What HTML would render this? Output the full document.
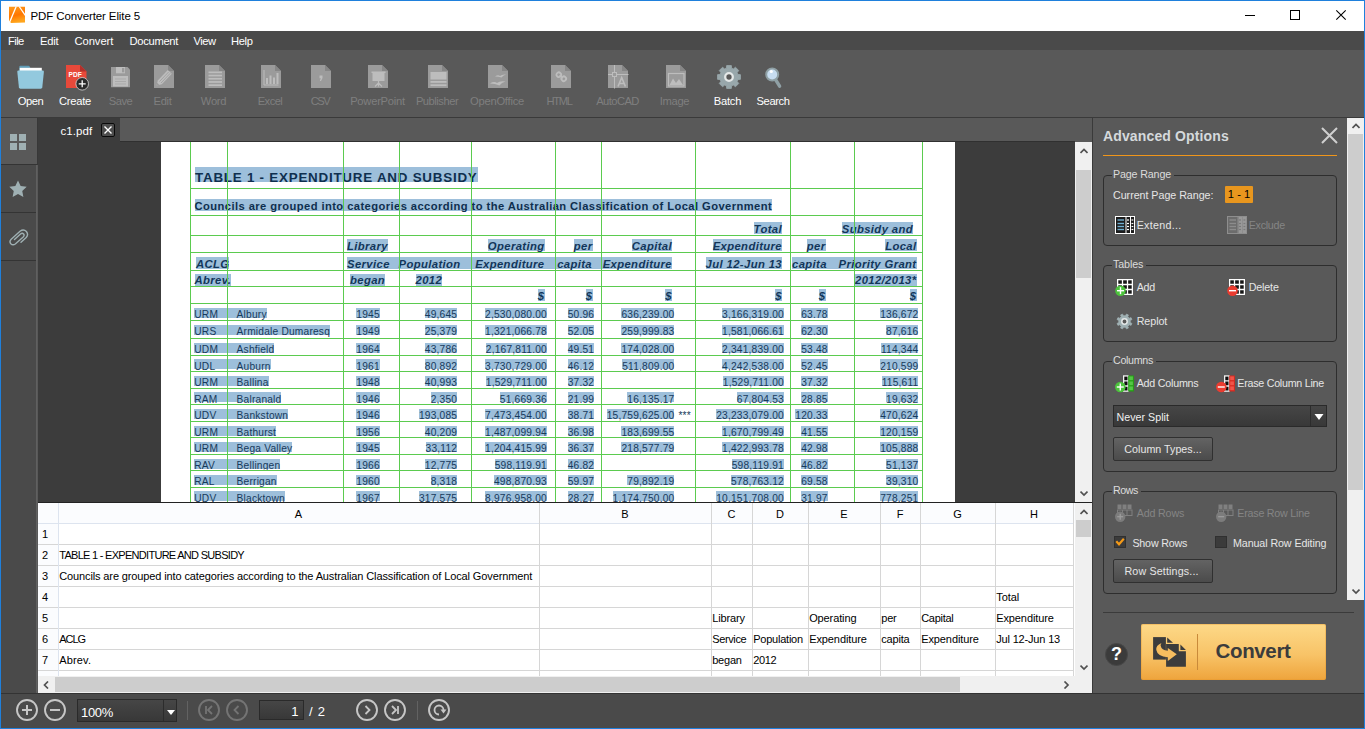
<!DOCTYPE html>
<html><head><meta charset="utf-8"><title>PDF Converter Elite 5</title>
<style>
*{box-sizing:border-box;margin:0;padding:0}
html,body{width:1365px;height:729px;overflow:hidden;background:#595959;font-family:"Liberation Sans",sans-serif;font-size:12px;color:#fff}
.a{position:absolute}
#win{position:absolute;left:0;top:0;width:1365px;height:729px;border:1px solid #1f80dc;overflow:hidden}
#title{left:0;top:0;width:1363px;height:30px;background:#fff}
#title .t{left:29.500px;top:9px;color:#000;font-size:11.5px;white-space:nowrap}
#menu{left:0;top:30px;width:1363px;height:19px;background:#4a4a4a}
#menu span{position:absolute;top:4px;font-size:11.2px;white-space:nowrap;color:#fff}
#tool{left:0;top:49px;width:1363px;height:68px;background:#595959;border-bottom:1px solid #3a3a3a;z-index:2}
.tl{position:absolute;top:45px;font-size:11.2px;white-space:nowrap;color:#fff;transform:translateX(-50%)}
.tl.d{color:#7f7f7f}
#side{left:0;top:116px;width:36px;height:576px;background:#4a4a4a;border-right:1px solid #606060}
.sb{position:absolute;left:0;width:35px;height:48px;background:#4a4a4a;border-bottom:1px solid #343434}
#tabs{left:37px;top:116px;width:1054px;height:24px;background:#595959;z-index:1}
#tab{left:0;top:0;width:82px;height:25px;background:#3c3c3c}
#doc{left:37px;top:140px;width:1037px;height:361px;background:#3c3c3c;overflow:hidden;border-top:1px solid #303030}
#page{left:123px;top:0;width:794px;height:361px;background:#fff;overflow:hidden}
#vs1{left:1074px;top:141px;width:17px;height:360px;background:#f0f0f0}
#sheet{left:37px;top:502px;width:1037px;height:173px;background:#fff;overflow:hidden;color:#000}
#vs2{left:1074px;top:502px;width:17px;height:173px;background:#f0f0f0}
#hs{left:37px;top:675px;width:1054px;height:17px;background:#f0f0f0}
#bot{left:0;top:692px;width:1363px;height:35px;background:#4a4a4a;border-top:1px solid #333}
#panel{left:1091px;top:116px;width:272px;height:576px;background:#595959;border-left:1px solid #3a3a3a}

#page i{position:absolute;display:block;z-index:3}
#page i.hb{z-index:0}
#page .v{top:0;width:1px;height:361px;background:#5bcb4f}
#page .hz{left:29px;width:733px;height:1px;background:#5bcb4f}
#page .hb{background:#9dbfdb}
#page b{position:absolute;display:block;white-space:nowrap;font-weight:normal;color:#173a5b;background:#9dbfdb;font-size:10.2px;letter-spacing:0.2px;z-index:1}
#page b.n{background:none}
#page b.t1{font-weight:bold;font-size:13.4px;color:#0f2f4f;letter-spacing:0.76px}
#page b.t2{font-weight:bold;font-size:11.2px;color:#0f2f4f;letter-spacing:0.42px}
#page b.hd{font-weight:bold;font-style:italic;font-size:11.3px;color:#12365a;letter-spacing:0.37px}

/*REST0*/
.th{background:#cdcdcd}
#sheet i{position:absolute;display:block}
#sheet .rl{left:0;width:1036px;height:1px;background:#d6d6d6}
#sheet .rl.hd{background:#dde4ef}
#sheet .cl{top:0;width:1px;height:174px;background:#d6d6d6}
#sheet .cl.hd{background:#dde4ef}
#sheet span{position:absolute;white-space:nowrap;color:#000;font-size:11px;line-height:12px}
#sheet .ch{top:5px;transform:translateX(-50%)}
#sheet .rh{left:4px}
#sheet .ce{letter-spacing:-0.2px}
/*REST1*/

/*PAN0*/
.gb{border:1px solid #2e2e2e;border-radius:4px}
.gl{background:#595959;font-size:10.7px;line-height:14px;color:#dcdcdc;white-space:nowrap;padding-left:1px}
.pl{font-size:10.7px;line-height:13px;color:#e6e6e6;white-space:nowrap}
.pl.dis{color:#858585}
.sel{border:1px solid #2a2a2a;background:linear-gradient(#464646,#383838)}
.btn{border:1px solid #303030;border-radius:2px;background:linear-gradient(#636363,#4b4b4b);font-size:10.7px;line-height:22px;text-align:center;color:#e6e6e6;white-space:nowrap}
.cb{width:12px;height:12px;background:#3b3b3b;border:1px solid #303030}
/*PAN1*/
</style></head><body>
<div id="win">
<div id="title" class="a">
<svg class="a" style="left:7px;top:5px" width="18" height="18" viewBox="0 0 18 18"><defs><linearGradient id="lg" x1="0" y1="0" x2="0.250" y2="1"><stop offset="0" stop-color="#ff9c1c"/><stop offset="0.600" stop-color="#ff7600"/><stop offset="1" stop-color="#ffa51c"/></linearGradient></defs><path d="M1 0.800 H17 V16.500 L3 16.900 L1 14.500 Z" fill="url(#lg)"/><path d="M8.200 0.500 L1.700 16" stroke="#fff" stroke-width="1.300" fill="none"/><path d="M11.200 0.500 L17.300 9.300" stroke="#fff" stroke-width="1.300" fill="none"/></svg>
<span class="a t" style="letter-spacing:-0.11px;margin-right:0.11px;">PDF Converter Elite 5</span>
<svg class="a" style="left:1237px;top:8px" width="120" height="14" viewBox="0 0 120 14"><path d="M7 6.500 H17" stroke="#000" stroke-width="1"/><rect x="52.500" y="1.500" width="9" height="9" fill="none" stroke="#000" stroke-width="1"/><path d="M98.300 1.300 L107.700 10.700 M107.700 1.300 L98.300 10.700" stroke="#000" stroke-width="1.100"/></svg>
</div>
<div id="menu" class="a"><span style="letter-spacing:-0.56px;margin-right:0.56px;left:7px">File</span><span style="letter-spacing:-0.25px;margin-right:0.25px;left:39px">Edit</span><span style="letter-spacing:-0.06px;margin-right:0.06px;left:73.500px">Convert</span><span style="letter-spacing:-0.31px;margin-right:0.31px;left:128.500px">Document</span><span style="letter-spacing:-0.46px;margin-right:0.46px;left:192.500px">View</span><span style="letter-spacing:-0.35px;margin-right:0.35px;left:230px">Help</span></div>
<div id="tool" class="a"><svg class="a" style="left:16px;top:15px" width="28" height="25" viewBox="0 0 28 25"><path d="M2.300 1.800 Q2.300 0.800 3.300 0.800 H11.500 Q12.300 0.800 12.700 1.600 L13.500 3.200 H23 V8 H2.300 Z" fill="#5f9cb6"/><path d="M2.700 2.800 H24.800 V9 H2.700 Z" fill="#fff"/><path d="M0.300 6.800 Q0.200 5.500 1.500 5.500 H25.700 Q27 5.500 26.900 6.800 L25.300 22.300 Q25.100 23.700 23.800 23.700 H3.400 Q2.100 23.700 1.900 22.300 Z" fill="#93c9de"/></svg><svg class="a" style="left:65px;top:14px" width="25" height="28" viewBox="0 0 25 28"><path d="M0 1 H14 L20.500 7.500 V24 H0 Z" fill="#e8493a"/><path d="M14 1 L20.500 7.500 H14 Z" fill="#b5302a"/><text x="2.600" y="12.600" font-family="Liberation Sans" font-weight="bold" font-size="6.600" fill="#fff">PDF</text><circle cx="16.200" cy="19.800" r="6.300" fill="#2b2b2b" stroke="#d8d8d8" stroke-width="0.800"/><path d="M12.700 19.800 H19.700 M16.200 16.300 V23.300" stroke="#fff" stroke-width="1.300"/></svg><svg class="a" style="left:110px;top:17px" width="20" height="21" viewBox="0 0 20 21"><path d="M0 0 H16.500 L19 2.500 V20.300 H0 Z" fill="#9b9b9b"/><rect x="5" y="0" width="9" height="6.300" fill="#bdbdbd"/><rect x="11" y="1" width="2.300" height="4.300" fill="#9b9b9b"/><rect x="2" y="9" width="15" height="10.500" fill="#bdbdbd"/><path d="M4 12 H15 M4 14.500 H15 M4 17 H15" stroke="#a8a8a8" stroke-width="0.900"/></svg><svg class="a" style="left:153px;top:15px" width="21" height="24" viewBox="0 0 21 24"><path d="M0 0 H14 L20 6 V23 H0 Z" fill="#9b9b9b"/><path d="M14 0 L20 6 H14 Z" fill="#868686"/><path d="M2.500 20.500 L3.800 15.500 L13.800 5 L17.800 8.800 L7.800 19.300 Z" fill="#bdbdbd"/><path d="M5.500 16.500 L14.800 6.800 M7 18 L16.300 8.200" stroke="#9b9b9b" stroke-width="0.800"/><path d="M2.500 20.500 L3.200 17.800 L5.200 19.800 Z" fill="#9b9b9b"/></svg><svg class="a" style="left:204px;top:15px" width="21" height="24" viewBox="0 0 21 24"><path d="M0 0 H14 L20 6 V23 H0 Z" fill="#9b9b9b"/><path d="M14 0 L20 6 H14 Z" fill="#868686"/><rect x="3.500" y="6.5" width="13.500" height="1.700" fill="#bdbdbd"/><rect x="3.500" y="9.7" width="13.500" height="1.700" fill="#bdbdbd"/><rect x="3.500" y="12.9" width="13.500" height="1.700" fill="#bdbdbd"/><rect x="3.500" y="16.1" width="13.500" height="1.700" fill="#bdbdbd"/><rect x="3.500" y="19.3" width="13.500" height="1.700" fill="#bdbdbd"/></svg><svg class="a" style="left:260px;top:15px" width="21" height="24" viewBox="0 0 21 24"><path d="M0 0 H14 L20 6 V23 H0 Z" fill="#9b9b9b"/><path d="M14 0 L20 6 H14 Z" fill="#868686"/><path d="M3 5 V20 H17.500" stroke="#bdbdbd" stroke-width="1" fill="none"/><rect x="5" y="13" width="2" height="6" fill="#bdbdbd"/><rect x="8.500" y="10.500" width="2" height="8.500" fill="#bdbdbd"/><rect x="12" y="12.500" width="2" height="6.500" fill="#bdbdbd"/><rect x="15.500" y="8" width="2" height="11" fill="#bdbdbd"/></svg><svg class="a" style="left:310px;top:15px" width="21" height="24" viewBox="0 0 21 24"><path d="M0 0 H14 L20 6 V23 H0 Z" fill="#9b9b9b"/><path d="M14 0 L20 6 H14 Z" fill="#868686"/><path d="M8.500 10.500 H11.500 V13 L10 16 H8.800 L9.800 13.300 H8.500 Z" fill="#bdbdbd"/></svg><svg class="a" style="left:367px;top:15px" width="21" height="24" viewBox="0 0 21 24"><path d="M0 0 H14 L20 6 V23 H0 Z" fill="#9b9b9b"/><path d="M14 0 L20 6 H14 Z" fill="#868686"/><rect x="3.500" y="6.500" width="14" height="1.500" fill="#bdbdbd"/><rect x="4.500" y="8" width="12" height="8" fill="#bdbdbd"/><path d="M10.500 16 V18.500 M10.500 18 L7 21.500 M10.500 18 L14 21.500 M10.500 18 V21.500" stroke="#bdbdbd" stroke-width="1.200" fill="none"/></svg><svg class="a" style="left:427px;top:15px" width="21" height="24" viewBox="0 0 21 24"><path d="M0 0 H14 L20 6 V23 H0 Z" fill="#9b9b9b"/><path d="M14 0 L20 6 H14 Z" fill="#868686"/><rect x="2.500" y="7" width="16" height="7.500" fill="#bdbdbd"/><rect x="2.500" y="16" width="16" height="1.800" fill="#bdbdbd"/><rect x="2.500" y="19.300" width="16" height="1.800" fill="#bdbdbd"/></svg><svg class="a" style="left:487px;top:15px" width="21" height="24" viewBox="0 0 21 24"><path d="M0 0 H14 L20 6 V23 H0 Z" fill="#9b9b9b"/><path d="M14 0 L20 6 H14 Z" fill="#868686"/><path d="M7 11.500 Q10 9.500 12 11 Q14 9 18 9.500 Q15 10.500 13.500 12.500 Q10.500 11.500 7 11.500Z" fill="#bdbdbd"/><path d="M2 18.500 Q6 16 9 18 Q12 15.500 17.500 16.500 Q13.500 17.500 11.500 20.500 Q7 18.500 2 18.500Z" fill="#bdbdbd"/></svg><svg class="a" style="left:550px;top:15px" width="21" height="24" viewBox="0 0 21 24"><path d="M0 0 H14 L20 6 V23 H0 Z" fill="#9b9b9b"/><path d="M14 0 L20 6 H14 Z" fill="#868686"/><g fill="none" stroke="#bdbdbd" stroke-width="1.800"><rect x="5.500" y="7.500" width="4.500" height="4.500" rx="2" transform="rotate(-40 7.7 9.700)"/><rect x="10.500" y="11.500" width="4.500" height="4.500" rx="2" transform="rotate(-40 12.7 13.700)"/></g><path d="M8.500 10.500 L12 13" stroke="#bdbdbd" stroke-width="1.600"/></svg><svg class="a" style="left:607px;top:15px" width="21" height="24" viewBox="0 0 21 24"><path d="M0 0 H14 L20 6 V23 H0 Z" fill="#9b9b9b"/><path d="M14 0 L20 6 H14 Z" fill="#868686"/><path d="M6.500 0 V23.500 M0 9.500 H20.500" stroke="#bdbdbd" stroke-width="1"/><rect x="4.500" y="7.500" width="4" height="4" fill="#9b9b9b" stroke="#bdbdbd" stroke-width="1"/><path d="M10 21.500 L13.700 12.500 L17.400 21.500 M11.400 18.500 H16" stroke="#bdbdbd" stroke-width="1.600" fill="none"/></svg><svg class="a" style="left:665px;top:15px" width="21" height="24" viewBox="0 0 21 24"><path d="M0 0 H14 L20 6 V23 H0 Z" fill="#9b9b9b"/><path d="M14 0 L20 6 H14 Z" fill="#868686"/><rect x="2.500" y="8.500" width="15.500" height="12.500" fill="none" stroke="#bdbdbd" stroke-width="1.200"/><path d="M3.500 20 L7 13.500 L10 18 L13 14 L17 20 Z" fill="#bdbdbd"/></svg><svg class="a" style="left:714px;top:13px" width="28" height="28" viewBox="0 0 28 28"><path d="M16.67 22.80 L16.33 25.47 L11.67 25.47 L11.33 22.80 L9.66 22.11 L7.54 23.75 L4.25 20.46 L5.89 18.34 L5.20 16.67 L2.53 16.33 L2.53 11.67 L5.20 11.33 L5.89 9.66 L4.25 7.54 L7.54 4.25 L9.66 5.89 L11.33 5.20 L11.67 2.53 L16.33 2.53 L16.67 5.20 L18.34 5.89 L20.46 4.25 L23.75 7.54 L22.11 9.66 L22.80 11.33 L25.47 11.67 L25.47 16.33 L22.80 16.67 L22.11 18.34 L23.75 20.46 L20.46 23.75 L18.34 22.11Z" fill="#98a7ab" stroke="#98a7ab" stroke-width="0.800" stroke-linejoin="round"/><circle cx="14" cy="14" r="3.800" fill="#595959" stroke="#e4e8e8" stroke-width="2.300"/></svg><svg class="a" style="left:760px;top:13px" width="24" height="28" viewBox="0 0 24 28"><path d="M15 17.300 L18.600 23.200" stroke="#8fa0a5" stroke-width="3.400" stroke-linecap="round"/><circle cx="11.200" cy="11.500" r="6" fill="#c7ddf1" stroke="#8fa0a5" stroke-width="2"/><circle cx="10.300" cy="8.500" r="1.600" fill="#fff"/></svg><span class="tl" style="letter-spacing:-0.49px;margin-right:0.49px;left:29.5px">Open</span><span class="tl" style="letter-spacing:-0.27px;margin-right:0.27px;left:74px">Create</span><span class="tl d" style="letter-spacing:-0.47px;margin-right:0.47px;left:119.5px">Save</span><span class="tl d" style="letter-spacing:-0.35px;margin-right:0.35px;left:161.5px">Edit</span><span class="tl d" style="letter-spacing:-0.31px;margin-right:0.31px;left:212.5px">Word</span><span class="tl d" style="letter-spacing:-0.55px;margin-right:0.55px;left:269px">Excel</span><span class="tl d" style="letter-spacing:-1.47px;margin-right:1.47px;left:319px">CSV</span><span class="tl d" style="letter-spacing:-0.25px;margin-right:0.25px;left:376.5px">PowerPoint</span><span class="tl d" style="letter-spacing:-0.49px;margin-right:0.49px;left:436px">Publisher</span><span class="tl d" style="letter-spacing:-0.23px;margin-right:0.23px;left:496px">OpenOffice</span><span class="tl d" style="letter-spacing:-1.34px;margin-right:1.34px;left:558px">HTML</span><span class="tl d" style="letter-spacing:-0.56px;margin-right:0.56px;left:616.5px">AutoCAD</span><span class="tl d" style="letter-spacing:-0.36px;margin-right:0.36px;left:673.5px">Image</span><span class="tl" style="letter-spacing:-0.26px;margin-right:0.26px;left:726.5px">Batch</span><span class="tl" style="letter-spacing:-0.43px;margin-right:0.43px;left:772px">Search</span></div>
<div id="side" class="a"><div class="sb" style="top:0;background:#595959;width:37px;border-right:1px solid #383838"><svg class="a" style="left:9px;top:17px" width="17" height="17" viewBox="0 0 17 17"><g fill="#9fb0b3"><rect x="0" y="0" width="7" height="7"/><rect x="9" y="0" width="7" height="7"/><rect x="0" y="9" width="7" height="7"/><rect x="9" y="9" width="7" height="7"/></g></svg></div><div class="sb" style="top:48px"><svg class="a" style="left:8px;top:15px" width="18" height="17" viewBox="0 0 19 18"><path d="M9.500 0.500 L12.300 6.400 L18.700 7.200 L14 11.600 L15.200 17.900 L9.500 14.800 L3.800 17.900 L5 11.600 L0.300 7.200 L6.700 6.400 Z" fill="#9fb0b3"/></svg></div><div class="sb" style="top:96px"><svg class="a" style="left:7px;top:15px" width="21" height="19" viewBox="0 0 21 19"><path d="M6.500 11.500 L12.500 6 Q14.300 4.600 15.600 6 Q16.800 7.500 15.200 9 L7.300 16 Q4.800 17.800 2.800 15.700 Q1 13.500 3.200 11.300 L12 3.300 Q15.500 0.700 18.400 3.500 Q20.800 6.500 18.200 9.500 L13 14.200" fill="none" stroke="#9fb0b3" stroke-width="1.400" stroke-linecap="round"/></svg></div></div>
<div id="tabs" class="a"><div id="tab" class="a"><span class="a" style="letter-spacing:0.08px;margin-right:-0.08px;left:22.500px;top:8px;font-size:11.5px;white-space:nowrap">c1.pdf</span><div class="a" style="left:63px;top:6px;width:14px;height:14px;border:1px solid #0a0a0a;border-radius:2px;background:#4d4d4d"><svg class="a" style="left:2px;top:2px" width="8" height="8" viewBox="0 0 8 8"><path d="M0.500 0.500 L7.500 7.500 M7.500 0.500 L0.500 7.500" stroke="#fff" stroke-width="1.400"/></svg></div></div></div>
<div id="doc" class="a"><div id="page" class="a"><!--PDF0--><i class="v" style="left:29px"></i><i class="v" style="left:66px"></i><i class="v" style="left:182px"></i><i class="v" style="left:238px"></i><i class="v" style="left:310px"></i><i class="v" style="left:394px"></i><i class="v" style="left:440px"></i><i class="v" style="left:534px"></i><i class="v" style="left:629px"></i><i class="v" style="left:693px"></i><i class="v" style="left:761px"></i><i class="hz" style="top:46px"></i><i class="hz" style="top:73px"></i><i class="hz" style="top:93px"></i><i class="hz" style="top:110px"></i><i class="hz" style="top:128px"></i><i class="hz" style="top:144px"></i><i class="hz" style="top:161px"></i><i class="hz" style="top:178px"></i><i class="hz" style="top:196px"></i><i class="hz" style="top:213px"></i><i class="hz" style="top:229px"></i><i class="hz" style="top:246px"></i><i class="hz" style="top:262px"></i><i class="hz" style="top:279px"></i><i class="hz" style="top:295px"></i><i class="hz" style="top:312px"></i><i class="hz" style="top:328px"></i><i class="hz" style="top:345px"></i><b class="t1" style="top:25px;height:15px;line-height:21.51px;left:34.0px;">TABLE 1 - EXPENDITURE AND SUBSIDY</b><b class="t2" style="top:57px;height:12px;line-height:15.84px;left:33.5px;">Councils are grouped into categories according to the Australian Classification of Local Government</b><b class="hd" style="top:80px;height:12px;line-height:14.57px;right:173.0px;">Total</b><b class="hd" style="top:80px;height:12px;line-height:14.57px;right:42.0px;">Subsidy and</b><b class="hd" style="top:97px;height:12px;line-height:14.57px;left:186.0px;">Library</b><b class="hd" style="top:97px;height:12px;line-height:14.57px;right:410.5px;">Operating</b><b class="hd" style="top:97px;height:12px;line-height:14.57px;right:362.5px;">per</b><b class="hd" style="top:97px;height:12px;line-height:14.57px;right:283.0px;">Capital</b><b class="hd" style="top:97px;height:12px;line-height:14.57px;right:173.0px;">Expenditure</b><b class="hd" style="top:97px;height:12px;line-height:14.57px;right:129.5px;">per</b><b class="hd" style="top:97px;height:12px;line-height:14.57px;right:38.5px;">Local</b><b class="hd" style="top:115px;height:12px;line-height:14.57px;left:35.0px;">ACLG</b><i class="hb" style="left:186.0px;top:115px;width:324.5px;height:12px"></i><b class="hd" style="top:115px;height:12px;line-height:14.57px;left:186.0px;">Service</b><b class="hd" style="top:115px;height:12px;line-height:14.57px;left:237.5px;">Population</b><b class="hd" style="top:115px;height:12px;line-height:14.57px;right:410.5px;">Expenditure</b><b class="hd" style="top:115px;height:12px;line-height:14.57px;right:363.0px;">capita</b><b class="hd" style="top:115px;height:12px;line-height:14.57px;right:283.0px;">Expenditure</b><b class="hd" style="top:115px;height:12px;line-height:14.57px;right:173.0px;">Jul 12-Jun 13</b><i class="hb" style="left:631.0px;top:115px;width:124.0px;height:12px"></i><b class="hd" style="top:115px;height:12px;line-height:14.57px;left:631.0px;">capita</b><b class="hd" style="top:115px;height:12px;line-height:14.57px;right:38.5px;">Priority Grant</b><b class="hd" style="top:132px;height:12px;line-height:13.97px;left:33.5px;">Abrev.</b><b class="hd" style="top:132px;height:12px;line-height:13.97px;left:189.0px;">began</b><b class="hd" style="top:132px;height:12px;line-height:13.97px;left:254.5px;">2012</b><b class="hd" style="top:132px;height:12px;line-height:13.97px;right:38.5px;">2012/2013*</b><b class="hd" style="top:147px;height:12px;line-height:14.57px;right:410.5px;">$</b><b class="hd" style="top:147px;height:12px;line-height:14.57px;right:362.5px;">$</b><b class="hd" style="top:147px;height:12px;line-height:14.57px;right:283.0px;">$</b><b class="hd" style="top:147px;height:12px;line-height:14.57px;right:173.0px;">$</b><b class="hd" style="top:147px;height:12px;line-height:14.57px;right:129.5px;">$</b><b class="hd" style="top:147px;height:12px;line-height:14.57px;right:38.5px;">$</b><i class="hb" style="left:33.3px;top:166px;width:42.7px;height:10px"></i><b class="d" style="top:166px;height:10px;line-height:14.73px;left:33.3px;">URM</b><b class="d" style="top:166px;height:10px;line-height:14.73px;left:75.6px;">Albury</b><b class="d" style="top:166px;height:10px;line-height:14.73px;left:195.3px;">1945</b><b class="d" style="top:166px;height:10px;line-height:14.73px;right:497.8px;">49,645</b><b class="d" style="top:166px;height:10px;line-height:14.73px;right:408.1px;">2,530,080.00</b><b class="d" style="top:166px;height:10px;line-height:14.73px;right:360.8px;">50.96</b><b class="d" style="top:166px;height:10px;line-height:14.73px;right:280.6px;">636,239.00</b><b class="d" style="top:166px;height:10px;line-height:14.73px;right:171.1px;">3,166,319.00</b><b class="d" style="top:166px;height:10px;line-height:14.73px;right:127.3px;">63.78</b><b class="d" style="top:166px;height:10px;line-height:14.73px;right:36.6px;">136,672</b><i class="hb" style="left:33.3px;top:183px;width:42.7px;height:10px"></i><b class="d" style="top:183px;height:10px;line-height:14.13px;left:33.3px;">URS</b><b class="d" style="top:183px;height:10px;line-height:14.13px;left:75.6px;">Armidale Dumaresq</b><b class="d" style="top:183px;height:10px;line-height:14.13px;left:195.3px;">1949</b><b class="d" style="top:183px;height:10px;line-height:14.13px;right:497.8px;">25,379</b><b class="d" style="top:183px;height:10px;line-height:14.13px;right:408.1px;">1,321,066.78</b><b class="d" style="top:183px;height:10px;line-height:14.13px;right:360.8px;">52.05</b><b class="d" style="top:183px;height:10px;line-height:14.13px;right:280.6px;">259,999.83</b><b class="d" style="top:183px;height:10px;line-height:14.13px;right:171.1px;">1,581,066.61</b><b class="d" style="top:183px;height:10px;line-height:14.13px;right:127.3px;">62.30</b><b class="d" style="top:183px;height:10px;line-height:14.13px;right:36.6px;">87,616</b><i class="hb" style="left:33.3px;top:201px;width:42.7px;height:10px"></i><b class="d" style="top:201px;height:10px;line-height:14.33px;left:33.3px;">UDM</b><b class="d" style="top:201px;height:10px;line-height:14.33px;left:75.6px;">Ashfield</b><b class="d" style="top:201px;height:10px;line-height:14.33px;left:195.3px;">1964</b><b class="d" style="top:201px;height:10px;line-height:14.33px;right:497.8px;">43,786</b><b class="d" style="top:201px;height:10px;line-height:14.33px;right:408.1px;">2,167,811.00</b><b class="d" style="top:201px;height:10px;line-height:14.33px;right:360.8px;">49.51</b><b class="d" style="top:201px;height:10px;line-height:14.33px;right:280.6px;">174,028.00</b><b class="d" style="top:201px;height:10px;line-height:14.33px;right:171.1px;">2,341,839.00</b><b class="d" style="top:201px;height:10px;line-height:14.33px;right:127.3px;">53.48</b><b class="d" style="top:201px;height:10px;line-height:14.33px;right:36.6px;">114,344</b><i class="hb" style="left:33.3px;top:217px;width:42.7px;height:10px"></i><b class="d" style="top:217px;height:10px;line-height:15.33px;left:33.3px;">UDL</b><b class="d" style="top:217px;height:10px;line-height:15.33px;left:75.6px;">Auburn</b><b class="d" style="top:217px;height:10px;line-height:15.33px;left:195.3px;">1961</b><b class="d" style="top:217px;height:10px;line-height:15.33px;right:497.8px;">80,892</b><b class="d" style="top:217px;height:10px;line-height:15.33px;right:408.1px;">3,730,729.00</b><b class="d" style="top:217px;height:10px;line-height:15.33px;right:360.8px;">46.12</b><b class="d" style="top:217px;height:10px;line-height:15.33px;right:280.6px;">511,809.00</b><b class="d" style="top:217px;height:10px;line-height:15.33px;right:171.1px;">4,242,538.00</b><b class="d" style="top:217px;height:10px;line-height:15.33px;right:127.3px;">52.45</b><b class="d" style="top:217px;height:10px;line-height:15.33px;right:36.6px;">210,599</b><i class="hb" style="left:33.3px;top:234px;width:42.7px;height:10px"></i><b class="d" style="top:234px;height:10px;line-height:14.13px;left:33.3px;">URM</b><b class="d" style="top:234px;height:10px;line-height:14.13px;left:75.6px;">Ballina</b><b class="d" style="top:234px;height:10px;line-height:14.13px;left:195.3px;">1948</b><b class="d" style="top:234px;height:10px;line-height:14.13px;right:497.8px;">40,993</b><b class="d" style="top:234px;height:10px;line-height:14.13px;right:408.1px;">1,529,711.00</b><b class="d" style="top:234px;height:10px;line-height:14.13px;right:360.8px;">37.32</b><b class="d" style="top:234px;height:10px;line-height:14.13px;right:171.1px;">1,529,711.00</b><b class="d" style="top:234px;height:10px;line-height:14.13px;right:127.3px;">37.32</b><b class="d" style="top:234px;height:10px;line-height:14.13px;right:36.6px;">115,611</b><i class="hb" style="left:33.3px;top:250px;width:42.7px;height:10px"></i><b class="d" style="top:250px;height:10px;line-height:15.53px;left:33.3px;">RAM</b><b class="d" style="top:250px;height:10px;line-height:15.53px;left:75.6px;">Balranald</b><b class="d" style="top:250px;height:10px;line-height:15.53px;left:195.3px;">1946</b><b class="d" style="top:250px;height:10px;line-height:15.53px;right:497.8px;">2,350</b><b class="d" style="top:250px;height:10px;line-height:15.53px;right:408.1px;">51,669.36</b><b class="d" style="top:250px;height:10px;line-height:15.53px;right:360.8px;">21.99</b><b class="d" style="top:250px;height:10px;line-height:15.53px;right:280.6px;">16,135.17</b><b class="d" style="top:250px;height:10px;line-height:15.53px;right:171.1px;">67,804.53</b><b class="d" style="top:250px;height:10px;line-height:15.53px;right:127.3px;">28.85</b><b class="d" style="top:250px;height:10px;line-height:15.53px;right:36.6px;">19,632</b><i class="hb" style="left:33.3px;top:267px;width:42.7px;height:10px"></i><b class="d" style="top:267px;height:10px;line-height:14.33px;left:33.3px;">UDV</b><b class="d" style="top:267px;height:10px;line-height:14.33px;left:75.6px;">Bankstown</b><b class="d" style="top:267px;height:10px;line-height:14.33px;left:195.3px;">1946</b><b class="d" style="top:267px;height:10px;line-height:14.33px;right:497.8px;">193,085</b><b class="d" style="top:267px;height:10px;line-height:14.33px;right:408.1px;">7,473,454.00</b><b class="d" style="top:267px;height:10px;line-height:14.33px;right:360.8px;">38.71</b><b class="d" style="top:267px;height:10px;line-height:14.33px;right:280.6px;">15,759,625.00</b><b class="d" style="top:267px;height:10px;line-height:14.33px;right:171.1px;">23,233,079.00</b><b class="d" style="top:267px;height:10px;line-height:14.33px;right:127.3px;">120.33</b><b class="d" style="top:267px;height:10px;line-height:14.33px;right:36.6px;">470,624</b><b class="d n" style="top:267px;height:10px;line-height:14.33px;right:264.1px;">***</b><i class="hb" style="left:33.3px;top:284px;width:42.7px;height:10px"></i><b class="d" style="top:284px;height:10px;line-height:13.73px;left:33.3px;">URM</b><b class="d" style="top:284px;height:10px;line-height:13.73px;left:75.6px;">Bathurst</b><b class="d" style="top:284px;height:10px;line-height:13.73px;left:195.3px;">1956</b><b class="d" style="top:284px;height:10px;line-height:13.73px;right:497.8px;">40,209</b><b class="d" style="top:284px;height:10px;line-height:13.73px;right:408.1px;">1,487,099.94</b><b class="d" style="top:284px;height:10px;line-height:13.73px;right:360.8px;">36.98</b><b class="d" style="top:284px;height:10px;line-height:13.73px;right:280.6px;">183,699.55</b><b class="d" style="top:284px;height:10px;line-height:13.73px;right:171.1px;">1,670,799.49</b><b class="d" style="top:284px;height:10px;line-height:13.73px;right:127.3px;">41.55</b><b class="d" style="top:284px;height:10px;line-height:13.73px;right:36.6px;">120,159</b><i class="hb" style="left:33.3px;top:300px;width:42.7px;height:10px"></i><b class="d" style="top:300px;height:10px;line-height:14.73px;left:33.3px;">URM</b><b class="d" style="top:300px;height:10px;line-height:14.73px;left:75.6px;">Bega Valley</b><b class="d" style="top:300px;height:10px;line-height:14.73px;left:195.3px;">1945</b><b class="d" style="top:300px;height:10px;line-height:14.73px;right:497.8px;">33,112</b><b class="d" style="top:300px;height:10px;line-height:14.73px;right:408.1px;">1,204,415.99</b><b class="d" style="top:300px;height:10px;line-height:14.73px;right:360.8px;">36.37</b><b class="d" style="top:300px;height:10px;line-height:14.73px;right:280.6px;">218,577.79</b><b class="d" style="top:300px;height:10px;line-height:14.73px;right:171.1px;">1,422,993.78</b><b class="d" style="top:300px;height:10px;line-height:14.73px;right:127.3px;">42.98</b><b class="d" style="top:300px;height:10px;line-height:14.73px;right:36.6px;">105,888</b><i class="hb" style="left:33.3px;top:317px;width:42.7px;height:10px"></i><b class="d" style="top:317px;height:10px;line-height:14.13px;left:33.3px;">RAV</b><b class="d" style="top:317px;height:10px;line-height:14.13px;left:75.6px;">Bellingen</b><b class="d" style="top:317px;height:10px;line-height:14.13px;left:195.3px;">1966</b><b class="d" style="top:317px;height:10px;line-height:14.13px;right:497.8px;">12,775</b><b class="d" style="top:317px;height:10px;line-height:14.13px;right:408.1px;">598,119.91</b><b class="d" style="top:317px;height:10px;line-height:14.13px;right:360.8px;">46.82</b><b class="d" style="top:317px;height:10px;line-height:14.13px;right:171.1px;">598,119.91</b><b class="d" style="top:317px;height:10px;line-height:14.13px;right:127.3px;">46.82</b><b class="d" style="top:317px;height:10px;line-height:14.13px;right:36.6px;">51,137</b><i class="hb" style="left:33.3px;top:333px;width:42.7px;height:10px"></i><b class="d" style="top:333px;height:10px;line-height:14.33px;left:33.3px;">RAL</b><b class="d" style="top:333px;height:10px;line-height:14.33px;left:75.6px;">Berrigan</b><b class="d" style="top:333px;height:10px;line-height:14.33px;left:195.3px;">1960</b><b class="d" style="top:333px;height:10px;line-height:14.33px;right:497.8px;">8,318</b><b class="d" style="top:333px;height:10px;line-height:14.33px;right:408.1px;">498,870.93</b><b class="d" style="top:333px;height:10px;line-height:14.33px;right:360.8px;">59.97</b><b class="d" style="top:333px;height:10px;line-height:14.33px;right:280.6px;">79,892.19</b><b class="d" style="top:333px;height:10px;line-height:14.33px;right:171.1px;">578,763.12</b><b class="d" style="top:333px;height:10px;line-height:14.33px;right:127.3px;">69.58</b><b class="d" style="top:333px;height:10px;line-height:14.33px;right:36.6px;">39,310</b><i class="hb" style="left:33.3px;top:349px;width:42.7px;height:10px"></i><b class="d" style="top:349px;height:10px;line-height:15.33px;left:33.3px;">UDV</b><b class="d" style="top:349px;height:10px;line-height:15.33px;left:75.6px;">Blacktown</b><b class="d" style="top:349px;height:10px;line-height:15.33px;left:195.3px;">1967</b><b class="d" style="top:349px;height:10px;line-height:15.33px;right:497.8px;">317,575</b><b class="d" style="top:349px;height:10px;line-height:15.33px;right:408.1px;">8,976,958.00</b><b class="d" style="top:349px;height:10px;line-height:15.33px;right:360.8px;">28.27</b><b class="d" style="top:349px;height:10px;line-height:15.33px;right:280.6px;">1,174,750.00</b><b class="d" style="top:349px;height:10px;line-height:15.33px;right:171.1px;">10,151,708.00</b><b class="d" style="top:349px;height:10px;line-height:15.33px;right:127.3px;">31.97</b><b class="d" style="top:349px;height:10px;line-height:15.33px;right:36.6px;">778,251</b><!--PDF1--></div></div>
<div id="vs1" class="a"><svg class="a" style="left:5px;top:6px" width="8" height="7" viewBox="0 0 8 7"><path d="M0.500 5 L4 1.500 L7.500 5" fill="none" stroke="#505050" stroke-width="1.700"/></svg><div class="a th" style="left:1px;top:28px;width:15px;height:108px"></div><svg class="a" style="left:5px;top:348px" width="8" height="7" viewBox="0 0 8 7"><path d="M0.500 1.500 L4 5 L7.500 1.500" fill="none" stroke="#505050" stroke-width="1.700"/></svg></div>
<div id="sep502" class="a" style="left:37px;top:501px;width:1054px;height:1px;background:#222"></div>
<div id="sheet" class="a"><div class="a" style="left:0;top:0;width:1037px;height:20px;background:#fbfcfe"></div><div class="a" style="left:0;top:0;width:20px;height:174px;background:#fbfcfe"></div><i class="rl hd" style="top:20px"></i><i class="rl" style="top:41px"></i><i class="rl" style="top:62px"></i><i class="rl" style="top:83px"></i><i class="rl" style="top:104px"></i><i class="rl" style="top:125px"></i><i class="rl" style="top:146px"></i><i class="rl" style="top:167px"></i><i class="cl hd" style="left:20px"></i><i class="cl" style="left:501px"></i><i class="cl" style="left:673px"></i><i class="cl" style="left:714px"></i><i class="cl" style="left:770px"></i><i class="cl" style="left:842px"></i><i class="cl" style="left:882px"></i><i class="cl" style="left:957px"></i><i class="cl" style="left:1035px"></i><span class="ch" style="left:260.5px">A</span><span class="ch" style="left:587.0px">B</span><span class="ch" style="left:693.5px">C</span><span class="ch" style="left:742.0px">D</span><span class="ch" style="left:806.0px">E</span><span class="ch" style="left:862.0px">F</span><span class="ch" style="left:919.5px">G</span><span class="ch" style="left:996.0px">H</span><span class="rh" style="top:25px">1</span><span class="rh" style="top:46px">2</span><span class="rh" style="top:67px">3</span><span class="rh" style="top:88px">4</span><span class="rh" style="top:109px">5</span><span class="rh" style="top:130px">6</span><span class="rh" style="top:151px">7</span><span class="ce" style="letter-spacing:-0.71px;margin-right:0.71px;left:21.2px;top:46px;">TABLE 1 - EXPENDITURE AND SUBSIDY</span><span class="ce" style="letter-spacing:-0.12px;margin-right:0.12px;left:21.2px;top:67px;">Councils are grouped into categories according to the Australian Classification of Local Government</span><span class="ce" style="letter-spacing:-0.05px;margin-right:0.05px;left:958.2px;top:88px;">Total</span><span class="ce" style="letter-spacing:-0.15px;margin-right:0.15px;left:674.2px;top:109px;">Library</span><span class="ce" style="letter-spacing:-0.12px;margin-right:0.12px;left:771.2px;top:109px;">Operating</span><span class="ce" style="letter-spacing:-0.17px;margin-right:0.17px;left:843.2px;top:109px;">per</span><span class="ce" style="letter-spacing:-0.29px;margin-right:0.29px;left:883.2px;top:109px;">Capital</span><span class="ce" style="letter-spacing:-0.10px;margin-right:0.10px;left:958.2px;top:109px;">Expenditure</span><span class="ce" style="letter-spacing:-0.99px;margin-right:0.99px;left:21.2px;top:130px;">ACLG</span><span class="ce" style="letter-spacing:-0.36px;margin-right:0.36px;left:674.2px;top:130px;">Service</span><span class="ce" style="letter-spacing:-0.23px;margin-right:0.23px;left:715.2px;top:130px;">Population</span><span class="ce" style="letter-spacing:-0.10px;margin-right:0.10px;left:771.2px;top:130px;">Expenditure</span><span class="ce" style="letter-spacing:-0.16px;margin-right:0.16px;left:843.2px;top:130px;">capita</span><span class="ce" style="letter-spacing:-0.10px;margin-right:0.10px;left:883.2px;top:130px;">Expenditure</span><span class="ce" style="letter-spacing:-0.17px;margin-right:0.17px;left:958.2px;top:130px;">Jul 12-Jun 13</span><span class="ce" style="letter-spacing:0.17px;margin-right:-0.17px;left:21.2px;top:151px;">Abrev.</span><span class="ce" style="letter-spacing:-0.20px;margin-right:0.20px;left:674.2px;top:151px;">began</span><span class="ce" style="letter-spacing:-0.37px;margin-right:0.37px;left:715.2px;top:151px;">2012</span></div>
<div id="vs2" class="a"><svg class="a" style="left:5px;top:6px" width="8" height="7" viewBox="0 0 8 7"><path d="M0.500 5 L4 1.500 L7.500 5" fill="none" stroke="#505050" stroke-width="1.700"/></svg><div class="a th" style="left:1px;top:17px;width:15px;height:17px"></div><svg class="a" style="left:5px;top:161px" width="8" height="7" viewBox="0 0 8 7"><path d="M0.500 1.500 L4 5 L7.500 1.500" fill="none" stroke="#505050" stroke-width="1.700"/></svg></div>
<div id="hs" class="a"><svg class="a" style="left:5px;top:5px" width="7" height="8" viewBox="0 0 7 8"><path d="M5 0.500 L1.500 4 L5 7.500" fill="none" stroke="#505050" stroke-width="1.700"/></svg><div class="a th" style="left:17px;top:1px;width:905px;height:15px"></div><svg class="a" style="left:1025px;top:5px" width="7" height="8" viewBox="0 0 7 8"><path d="M1.500 0.500 L5 4 L1.500 7.500" fill="none" stroke="#505050" stroke-width="1.700"/></svg></div>
<div id="panel" class="a"><span class="a" style="letter-spacing:0.14px;margin-right:-0.14px;left:10px;top:11px;font-size:14px;font-weight:bold;color:#d5d9dc;white-space:nowrap;">Advanced Options</span><svg class="a" style="left:228px;top:9.5px" width="17" height="17" viewBox="0 0 17 17"><path d="M1 1 L16 16 M16 1 L1 16" stroke="#cfcfcf" stroke-width="2"/></svg><div class="a" style="left:10px;top:38px;width:234px;height:1px;background:#f0961a"></div><div class="a gb" style="left:10px;top:58px;width:234px;height:71px"></div><span class="a gl" style="left:19px;top:50px;width:62px"><span style="letter-spacing:-0.14px;margin-right:0.14px;">Page Range</span></span><span class="a pl " style="letter-spacing:-0.03px;margin-right:0.03px;left:20px;top:72px;">Current Page Range:</span><div class="a" style="left:132px;top:69px;width:28px;height:17px;background:#e8961e;border-radius:1px;color:#000;font-size:11.2px;line-height:17px;text-align:center;white-space:nowrap">1 - 1</div><svg class="a" style="left:22px;top:99px" width="20" height="18" viewBox="0 0 20 18"><rect x="0.500" y="0.500" width="19" height="17" fill="#1c1c1c" stroke="#fff" stroke-width="1"/><path d="M11 0.500 V17.500 M15.500 0.500 V17.500" stroke="#fff" stroke-width="1"/><rect x="2.500" y="3.3" width="6.500" height="1.400" fill="#6faed0"/><rect x="2.500" y="6.8" width="6.500" height="1.400" fill="#6faed0"/><rect x="2.500" y="9.8" width="6.500" height="1.400" fill="#6faed0"/><rect x="2.500" y="12.8" width="6.500" height="1.400" fill="#6faed0"/><rect x="12" y="3.4" width="2" height="1.200" fill="#fff"/><rect x="16.500" y="3.4" width="1.800" height="1.200" fill="#fff"/><rect x="12" y="6.9" width="2" height="1.200" fill="#fff"/><rect x="16.500" y="6.9" width="1.800" height="1.200" fill="#fff"/><rect x="12" y="9.9" width="2" height="1.200" fill="#fff"/><rect x="16.500" y="9.9" width="1.800" height="1.200" fill="#fff"/><rect x="12" y="12.9" width="2" height="1.200" fill="#fff"/><rect x="16.500" y="12.9" width="1.800" height="1.200" fill="#fff"/></svg><span class="a pl " style="letter-spacing:0.29px;margin-right:-0.29px;left:43.7px;top:101.6px;">Extend...</span><svg class="a" style="left:134px;top:99px" width="20" height="18" viewBox="0 0 20 18"><rect x="0.500" y="0.500" width="19" height="17" fill="#6c6c6c" stroke="#8e8e8e" stroke-width="1"/><rect x="11.500" y="1" width="7.500" height="16" fill="#999"/><path d="M11 0.500 V17.500 M15.500 0.500 V17.500" stroke="#8e8e8e" stroke-width="1"/><rect x="2.500" y="3.3" width="6.500" height="1.400" fill="#8c8c8c"/><rect x="2.500" y="6.8" width="6.500" height="1.400" fill="#8c8c8c"/><rect x="2.500" y="9.8" width="6.500" height="1.400" fill="#8c8c8c"/><rect x="2.500" y="12.8" width="6.500" height="1.400" fill="#8c8c8c"/><rect x="12" y="3.4" width="2" height="1.200" fill="#7a7a7a"/><rect x="16.500" y="3.4" width="1.800" height="1.200" fill="#7a7a7a"/><rect x="12" y="6.9" width="2" height="1.200" fill="#7a7a7a"/><rect x="16.500" y="6.9" width="1.800" height="1.200" fill="#7a7a7a"/><rect x="12" y="9.9" width="2" height="1.200" fill="#7a7a7a"/><rect x="16.500" y="9.9" width="1.800" height="1.200" fill="#7a7a7a"/><rect x="12" y="12.9" width="2" height="1.200" fill="#7a7a7a"/><rect x="16.500" y="12.9" width="1.800" height="1.200" fill="#7a7a7a"/></svg><span class="a pl dis" style="letter-spacing:-0.26px;margin-right:0.26px;left:155.7px;top:101.6px;">Exclude</span><div class="a gb" style="left:10px;top:148px;width:234px;height:77px"></div><span class="a gl" style="left:19px;top:140px;width:34.3px"><span style="letter-spacing:-0.10px;margin-right:0.10px;">Tables</span></span><svg class="a" style="left:22px;top:161px" width="20" height="19" viewBox="0 0 20 19"><rect x="2.650" y="1.650" width="14.700" height="14.700" fill="#161616" stroke="#fff" stroke-width="1.300"/><path d="M7.500 1.500 V16.500 M12.500 1.500 V16.500 M2.500 6.500 H17.500 M2.500 11.500 H17.500" stroke="#fff" stroke-width="1.300"/><circle cx="5.5" cy="12.7" r="5.300" fill="#4cc23c"/><path d="M2.0 12.7 H9.0" stroke="#fff" stroke-width="1.400"/><path d="M5.5 9.2 V16.2" stroke="#fff" stroke-width="1.400"/></svg><span class="a pl " style="letter-spacing:-0.21px;margin-right:0.21px;left:43.7px;top:164.2px;">Add</span><svg class="a" style="left:134px;top:161px" width="20" height="19" viewBox="0 0 20 19"><rect x="2.650" y="1.650" width="14.700" height="14.700" fill="#161616" stroke="#fff" stroke-width="1.300"/><path d="M7.500 1.500 V16.500 M12.500 1.500 V16.500 M2.500 6.500 H17.500 M2.500 11.500 H17.500" stroke="#fff" stroke-width="1.300"/><circle cx="5.5" cy="12.7" r="5.300" fill="#ea3c30"/><path d="M2.0 12.7 H9.0" stroke="#fff" stroke-width="1.400"/></svg><span class="a pl " style="letter-spacing:-0.15px;margin-right:0.15px;left:155.7px;top:164.2px;">Delete</span><svg class="a" style="left:23.4px;top:195.5px" width="17" height="17" viewBox="0 0 17 17"><path d="M14.20 9.58 L15.86 10.40 L15.05 12.36 L13.29 11.77 L11.77 13.29 L12.36 15.05 L10.40 15.86 L9.58 14.20 L7.42 14.20 L6.60 15.86 L4.64 15.05 L5.23 13.29 L3.71 11.77 L1.95 12.36 L1.14 10.40 L2.80 9.58 L2.80 7.42 L1.14 6.60 L1.95 4.64 L3.71 5.23 L5.23 3.71 L4.64 1.95 L6.60 1.14 L7.42 2.80 L9.58 2.80 L10.40 1.14 L12.36 1.95 L11.77 3.71 L13.29 5.23 L15.05 4.64 L15.86 6.60 L14.20 7.42Z" fill="#9fb0b3" stroke="#9fb0b3" stroke-width="0.800" stroke-linejoin="round"/><circle cx="8.500" cy="8.500" r="2.700" fill="#595959" stroke="#e4e8e8" stroke-width="1.500"/></svg><span class="a pl " style="letter-spacing:-0.05px;margin-right:0.05px;left:43.7px;top:197.8px;">Replot</span><div class="a gb" style="left:10px;top:244px;width:234px;height:111px"></div><span class="a gl" style="left:19px;top:236px;width:44px"><span style="letter-spacing:-0.31px;margin-right:0.31px;">Columns</span></span><svg class="a" style="left:22px;top:257.5px" width="20" height="18" viewBox="0 0 20 18"><rect x="8.650" y="0.950" width="4.500" height="15.200" fill="#0c0c0c" stroke="#f2f2f2" stroke-width="1.300"/><path d="M8.500 5.800 H13.200 M8.500 11 H13.200" stroke="#f2f2f2" stroke-width="1.300"/><rect x="13.200" y="0.500" width="5.700" height="16" fill="#23a012"/><rect x="14.200" y="1.4" width="3.700" height="3.800" fill="#55c646"/><rect x="14.200" y="6.4" width="3.700" height="3.800" fill="#55c646"/><rect x="14.200" y="11.4" width="3.700" height="3.800" fill="#55c646"/><circle cx="5.3" cy="12" r="5.300" fill="#4cc23c"/><path d="M1.7999999999999998 12 H8.8" stroke="#fff" stroke-width="1.400"/><path d="M5.3 8.5 V15.5" stroke="#fff" stroke-width="1.400"/></svg><span class="a pl " style="letter-spacing:-0.22px;margin-right:0.22px;left:43.7px;top:259.7px;">Add Columns</span><svg class="a" style="left:123.3px;top:257.5px" width="20" height="18" viewBox="0 0 20 18"><rect x="8.650" y="0.950" width="4.500" height="15.200" fill="#0c0c0c" stroke="#f2f2f2" stroke-width="1.300"/><path d="M8.500 5.800 H13.200 M8.500 11 H13.200" stroke="#f2f2f2" stroke-width="1.300"/><rect x="13.200" y="0.500" width="5.700" height="16" fill="#d8281e"/><rect x="14.200" y="1.4" width="3.700" height="3.800" fill="#f0554a"/><rect x="14.200" y="6.4" width="3.700" height="3.800" fill="#f0554a"/><rect x="14.200" y="11.4" width="3.700" height="3.800" fill="#f0554a"/><circle cx="5.3" cy="12" r="5.300" fill="#ea3c30"/><path d="M1.7999999999999998 12 H8.8" stroke="#fff" stroke-width="1.400"/></svg><span class="a pl " style="letter-spacing:-0.25px;margin-right:0.25px;left:144.3px;top:259.7px;">Erase Column Line</span><div class="a sel" style="left:20px;top:288px;width:214px;height:22px"><span class="a" style="letter-spacing:0.01px;margin-right:-0.01px;left:2.500px;top:4.500px;font-size:10.7px;white-space:nowrap;color:#f0f0f0">Never Split</span><div class="a" style="left:196px;top:0;width:1px;height:20px;background:#2c2c2c"></div><svg class="a" style="left:200px;top:8px" width="10" height="6" viewBox="0 0 10 6"><path d="M0.500 0 H9.500 L5 6 Z" fill="#fff"/></svg></div><div class="a btn" style="left:20px;top:320px;width:100px;height:24px"><span style="letter-spacing:0.02px;margin-right:-0.02px;">Column Types...</span></div><div class="a gb" style="left:10px;top:374px;width:234px;height:103px"></div><span class="a gl" style="left:19px;top:366px;width:29px"><span style="letter-spacing:-0.43px;margin-right:0.43px;">Rows</span></span><svg class="a" style="left:22px;top:387px" width="19" height="19" viewBox="0 0 19 19"><rect x="2.5" y="0.500" width="4" height="4.500" fill="#808080"/><rect x="7.5" y="0.500" width="4" height="4.500" fill="#808080"/><rect x="12.5" y="0.500" width="4" height="4.500" fill="#808080"/><rect x="2.500" y="6" width="14.500" height="5.500" fill="none" stroke="#808080" stroke-width="1"/><path d="M7.500 6 V11.500 M12 6 V11.500" stroke="#808080"/><circle cx="5.200" cy="12.700" r="5.200" fill="#7c7c7c"/><path d="M2.200 12.700 H8.200" stroke="#9c9c9c" stroke-width="1.300"/><path d="M5.200 9.700 V15.700" stroke="#9c9c9c" stroke-width="1.300"/></svg><span class="a pl dis" style="letter-spacing:-0.16px;margin-right:0.16px;left:43.7px;top:389.9px;">Add Rows</span><svg class="a" style="left:123px;top:387px" width="19" height="19" viewBox="0 0 19 19"><rect x="2.5" y="0.500" width="4" height="4.500" fill="#808080"/><rect x="7.5" y="0.500" width="4" height="4.500" fill="#808080"/><rect x="12.5" y="0.500" width="4" height="4.500" fill="#808080"/><rect x="2.500" y="6" width="14.500" height="5.500" fill="none" stroke="#808080" stroke-width="1"/><path d="M7.500 6 V11.500 M12 6 V11.500" stroke="#808080"/><circle cx="5.200" cy="12.700" r="5.200" fill="#7c7c7c"/><path d="M2.200 12.700 H8.200" stroke="#9c9c9c" stroke-width="1.300"/></svg><span class="a pl dis" style="letter-spacing:-0.22px;margin-right:0.22px;left:144.3px;top:389.9px;">Erase Row Line</span><div class="a cb" style="left:21px;top:419px"><svg class="a" style="left:0;top:0" width="10" height="10" viewBox="0 0 10 10"><path d="M1.300 4.300 L4 7.300 L8.800 1.800" fill="none" stroke="#f59a17" stroke-width="2.100"/></svg></div><span class="a pl " style="letter-spacing:-0.17px;margin-right:0.17px;left:39.4px;top:419.5px;">Show Rows</span><div class="a cb" style="left:122px;top:419px"></div><span class="a pl " style="letter-spacing:-0.09px;margin-right:0.09px;left:140px;top:419.5px;">Manual Row Editing</span><div class="a btn" style="left:20px;top:442px;width:100px;height:24px;padding-right:3px"><span style="letter-spacing:0.16px;margin-right:-0.16px;">Row Settings...</span></div><div class="a" style="left:254px;top:0;width:17px;height:483px;background:#f0f0f0"><svg class="a" style="left:5px;top:6px" width="8" height="7" viewBox="0 0 8 7"><path d="M0.500 5 L4 1.500 L7.500 5" fill="none" stroke="#505050" stroke-width="1.700"/></svg><div class="a th" style="left:1px;top:17px;width:15px;height:356px"></div><svg class="a" style="left:5px;top:471px" width="8" height="7" viewBox="0 0 8 7"><path d="M0.500 1.500 L4 5 L7.500 1.500" fill="none" stroke="#505050" stroke-width="1.700"/></svg></div><div class="a" style="left:10px;top:495px;width:251px;height:1px;background:#3b3b3b"></div><div class="a" style="left:12px;top:525.5px;width:23px;height:23px;border-radius:12px;background:#3b3b3b;border:1px solid #474747;color:#fff;font-weight:bold;font-size:18px;line-height:21px;text-align:center">?</div><div class="a" style="left:48px;top:507px;width:185px;height:56px;border-radius:2px;background:linear-gradient(#fdd988,#f8c367 55%,#eea43c);box-shadow:inset 0 0 0 1px rgba(230,150,40,0.35)"><svg class="a" style="left:11px;top:12px" width="36" height="32" viewBox="0 0 36 32"><path d="M1.100 1.100 H13.900 V23.600 H1.100 Z" fill="#3c3c3c"/><path d="M15.200 1.500 L21 6.700 H15.200 Z" fill="#3c3c3c"/><path d="M14.100 8 H26.800 V15.200 H33.900 V30.700 H14.100 Z" fill="#3c3c3c"/><path d="M28.400 8.600 L33.900 13.900 H28.400 Z" fill="#3c3c3c"/><path d="M9.500 7 Q3.500 9.500 4.300 14 Q5.500 20.500 15.800 21.300 V25 L24.800 18.300 L15.800 11.900 V14.700 Q9.500 14.500 8.600 9.500 Q8.600 8 9.500 7 Z" fill="#f6bd5f"/></svg><div class="a" style="left:56px;top:10px;width:1px;height:36px;background:#c98a3a"></div><span class="a" style="letter-spacing:-0.35px;margin-right:0.35px;left:74.500px;top:15px;font-size:20.500px;font-weight:bold;color:#3c3c3c;white-space:nowrap;">Convert</span></div></div>
<div id="bot" class="a"><svg class="a" style="left:13.7px;top:4px" width="24" height="24" viewBox="0 0 24 24"><circle cx="12" cy="12" r="10" fill="none" stroke="#c6c6c6" stroke-width="1.900"/><path d="M7 12 H17 M12 7 V17" stroke="#c6c6c6" stroke-width="2"/></svg><svg class="a" style="left:41.8px;top:4px" width="24" height="24" viewBox="0 0 24 24"><circle cx="12" cy="12" r="10" fill="none" stroke="#c6c6c6" stroke-width="1.900"/><path d="M7 12 H17" stroke="#c6c6c6" stroke-width="2"/></svg><div class="a sel" style="left:76px;top:5px;width:100px;height:23px"><span class="a" style="letter-spacing:-0.31px;margin-right:0.31px;left:3px;top:4.500px;font-size:13px;white-space:nowrap;color:#fff">100%</span><div class="a" style="left:85px;top:0;width:1px;height:21px;background:#2c2c2c"></div><svg class="a" style="left:89px;top:10px" width="8" height="5" viewBox="0 0 8 5"><path d="M0 0 H8 L4 5 Z" fill="#fff"/></svg></div><div class="a" style="left:186px;top:7px;width:1px;height:19px;background:#626262"></div><svg class="a" style="left:196.1px;top:4px" width="24" height="24" viewBox="0 0 24 24"><circle cx="12" cy="12" r="10" fill="none" stroke="#747474" stroke-width="1.900"/><path d="M9 8 V16" stroke="#747474" stroke-width="1.800"/><path d="M15 8 L11 12 L15 16" fill="none" stroke="#747474" stroke-width="1.800"/></svg><svg class="a" style="left:224.2px;top:4px" width="24" height="24" viewBox="0 0 24 24"><circle cx="12" cy="12" r="10" fill="none" stroke="#747474" stroke-width="1.900"/><path d="M13.500 8 L9.500 12 L13.500 16" fill="none" stroke="#747474" stroke-width="1.800"/></svg><div class="a sel" style="left:258px;top:6px;width:45px;height:20px"><span class="a" style="right:4.500px;top:3px;font-size:13px;color:#fff">1</span></div><span class="a" style="letter-spacing:0.78px;margin-right:-0.78px;left:308px;top:10px;font-size:13px;color:#fff;white-space:pre">/ 2</span><svg class="a" style="left:353.8px;top:4px" width="24" height="24" viewBox="0 0 24 24"><circle cx="12" cy="12" r="10" fill="none" stroke="#c6c6c6" stroke-width="1.900"/><path d="M10.500 8 L14.500 12 L10.500 16" fill="none" stroke="#c6c6c6" stroke-width="1.800"/></svg><svg class="a" style="left:382.1px;top:4px" width="24" height="24" viewBox="0 0 24 24"><circle cx="12" cy="12" r="10" fill="none" stroke="#c6c6c6" stroke-width="1.900"/><path d="M15 8 V16" stroke="#c6c6c6" stroke-width="1.800"/><path d="M9 8 L13 12 L9 16" fill="none" stroke="#c6c6c6" stroke-width="1.800"/></svg><div class="a" style="left:416px;top:7px;width:1px;height:19px;background:#626262"></div><svg class="a" style="left:426.2px;top:4px" width="24" height="24" viewBox="0 0 24 24"><circle cx="12" cy="12" r="10" fill="none" stroke="#c6c6c6" stroke-width="1.900"/><path d="M16.500 12 A4.500 4.500 0 1 0 12 16.500" fill="none" stroke="#c6c6c6" stroke-width="1.800"/><path d="M13.500 11.500 H19.500 L16.500 15.500 Z" fill="#c6c6c6"/></svg></div>
</div>
</body></html>
